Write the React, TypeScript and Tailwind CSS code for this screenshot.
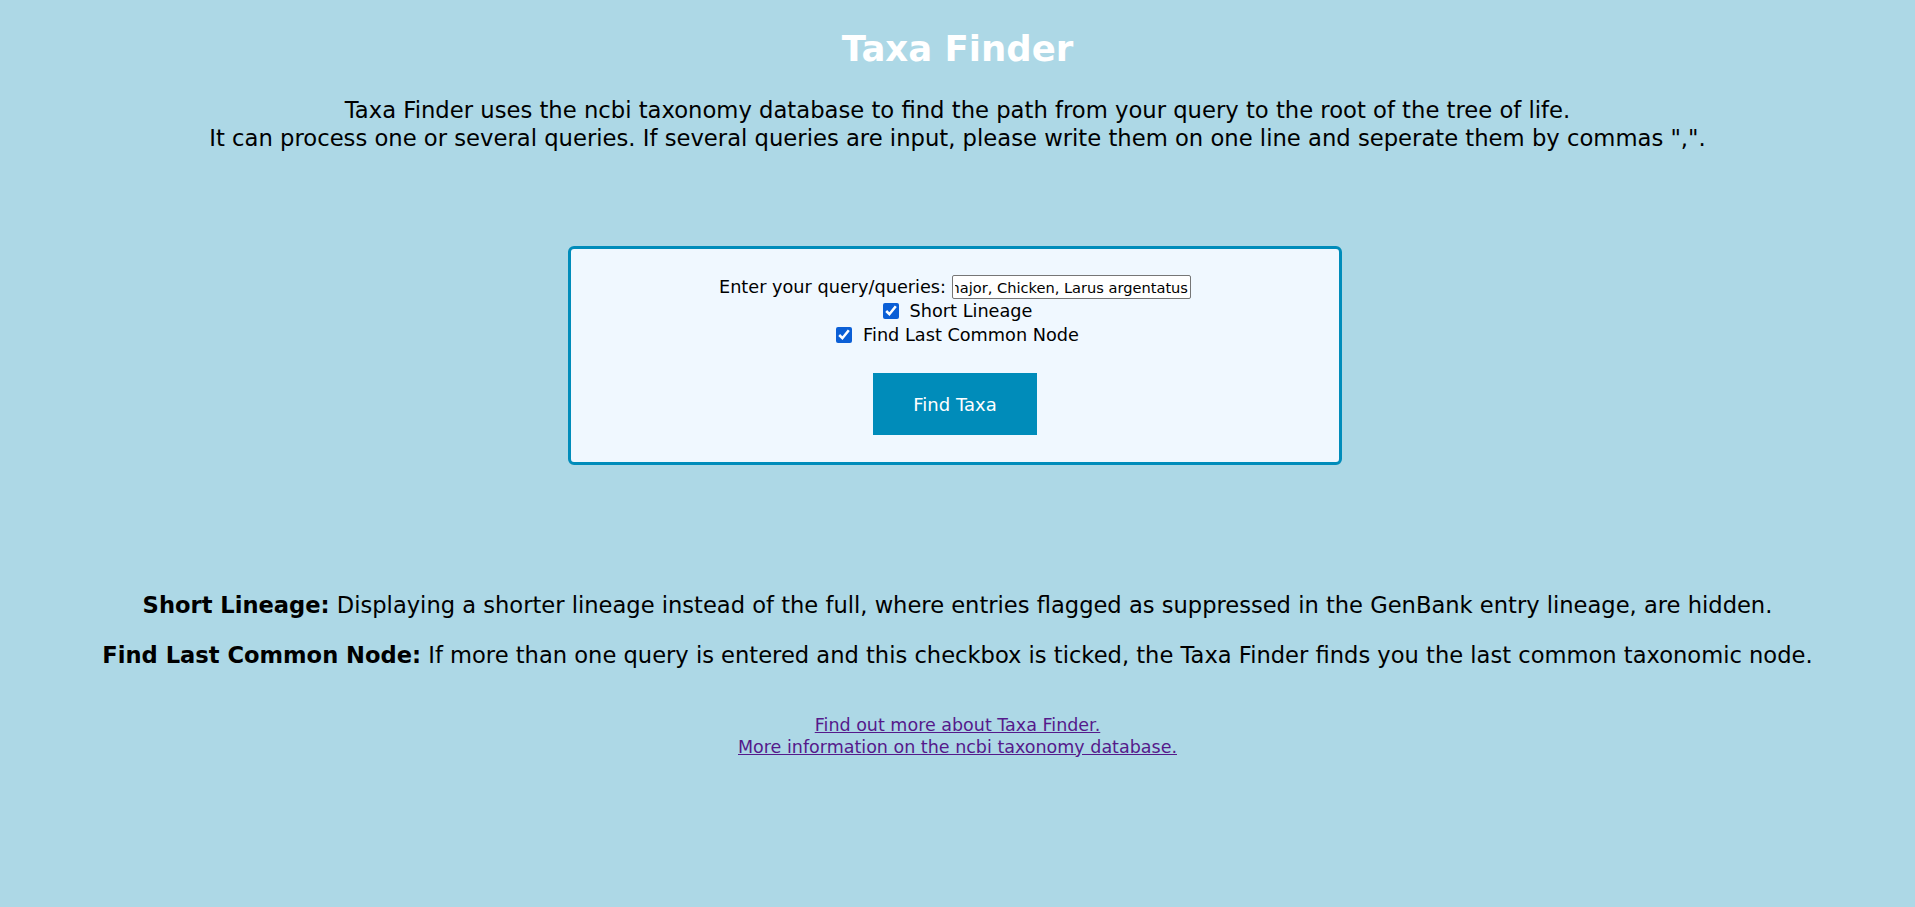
import React, { useEffect, useRef } from "react";

export default function App() {
  const inputRef = useRef<HTMLInputElement>(null);
  useEffect(() => {
    const el = inputRef.current;
    if (el) el.scrollLeft = el.scrollWidth;
  }, []);

  return (
    <div className="min-h-screen bg-[#ADD8E6] pt-[29px] text-black font-['DejaVu_Sans',Verdana,sans-serif]">
      <h1 className="text-center text-[35.5px] leading-[40px] font-bold text-white">Taxa Finder</h1>
      <p className="mt-[27px] text-center text-[22.7px] leading-[28px]">
        Taxa Finder uses the ncbi taxonomy database to find the path from your query to the root of the tree of life.
        <br />
        It can process one or several queries. If several queries are input, please write them on one line and seperate them by commas ",".
      </p>

      <div className="mt-[94px] flex justify-center pr-[5px]">
        <form
          onSubmit={(e) => e.preventDefault()}
          className="flex w-[774px] flex-col items-center rounded-[6px] border-[3px] border-[#008CBA] bg-[#F0F8FF] pt-[26px] pb-[27px]"
        >
          <div className="flex h-[24px] items-center gap-[6px] text-[17.7px]">
            <label htmlFor="q">Enter your query/queries:</label>
            <input
              id="q"
              ref={inputRef}
              type="text"
              defaultValue="Parus major, Chicken, Larus argentatus"
              className="h-[24px] w-[239px] rounded-[2px] border border-[#767676] bg-white px-[2px] text-[14.6px] text-black outline-none"
            />
          </div>
          <label className="flex h-[24px] items-center gap-[11px] pl-[5px] text-[17.7px]">
            <input type="checkbox" defaultChecked className="h-4 w-4 accent-[#0b5fd6]" />
            Short Lineage
          </label>
          <label className="flex h-[24px] items-center gap-[11px] pl-[5px] text-[17.7px]">
            <input type="checkbox" defaultChecked className="h-4 w-4 accent-[#0b5fd6]" />
            Find Last Common Node
          </label>
          <button
            type="submit"
            className="mt-[26px] h-[62px] w-[164px] bg-[#008CBA] text-[18px] text-white"
          >
            Find Taxa
          </button>
        </form>
      </div>

      <div className="mt-[124.5px] text-center text-[22.6px] leading-[30px]">
        <p>
          <b>Short Lineage:</b> Displaying a shorter lineage instead of the full, where entries flagged as suppressed in the GenBank entry lineage, are hidden.
        </p>
        <p className="mt-[20px]">
          <b>Find Last Common Node:</b> If more than one query is entered and this checkbox is ticked, the Taxa Finder finds you the last common taxonomic node.
        </p>
      </div>

      <div className="mt-[44px] flex flex-col items-center text-[17.5px] leading-[22px]">
        <a href="#" className="text-[#551A8B] underline">Find out more about Taxa Finder.</a>
        <a href="#" className="text-[#551A8B] underline">More information on the ncbi taxonomy database.</a>
      </div>
    </div>
  );
}
